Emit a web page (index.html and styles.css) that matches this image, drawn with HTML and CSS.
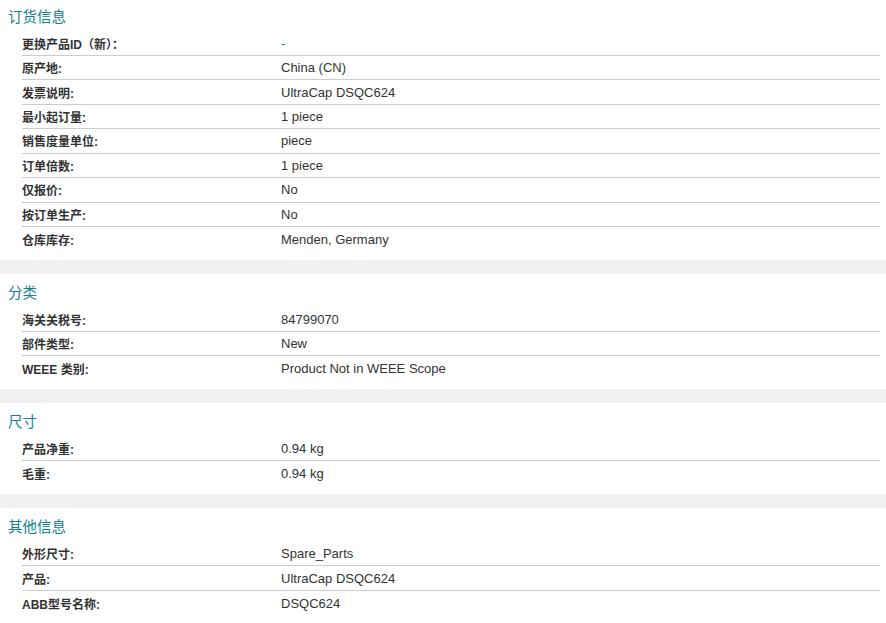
FILE: index.html
```html
<!DOCTYPE html>
<html lang="zh-CN">
<head>
<meta charset="utf-8">
<title>产品信息</title>
<link rel="stylesheet" href="styles.css">
</head>
<body>
<div class="page">
  <section class="section first">
    <h2 class="title">订货信息</h2>
    <div class="rows">
      <div class="row"><div class="label">更换产品ID（新）：</div><div class="value link">-</div></div>
      <div class="row"><div class="label">原产地:</div><div class="value">China (CN)</div></div>
      <div class="row"><div class="label">发票说明:</div><div class="value">UltraCap DSQC624</div></div>
      <div class="row"><div class="label">最小起订量:</div><div class="value">1 piece</div></div>
      <div class="row"><div class="label">销售度量单位:</div><div class="value">piece</div></div>
      <div class="row"><div class="label">订单倍数:</div><div class="value">1 piece</div></div>
      <div class="row"><div class="label">仅报价:</div><div class="value">No</div></div>
      <div class="row"><div class="label">按订单生产:</div><div class="value">No</div></div>
      <div class="row"><div class="label">仓库库存:</div><div class="value">Menden, Germany</div></div>
    </div>
  </section>
  <section class="section">
    <h2 class="title">分类</h2>
    <div class="rows">
      <div class="row"><div class="label">海关关税号:</div><div class="value">84799070</div></div>
      <div class="row"><div class="label">部件类型:</div><div class="value">New</div></div>
      <div class="row"><div class="label">WEEE 类别:</div><div class="value">Product Not in WEEE Scope</div></div>
    </div>
  </section>
  <section class="section">
    <h2 class="title">尺寸</h2>
    <div class="rows">
      <div class="row"><div class="label">产品净重:</div><div class="value">0.94 kg</div></div>
      <div class="row"><div class="label">毛重:</div><div class="value">0.94 kg</div></div>
    </div>
  </section>
  <section class="section last">
    <h2 class="title">其他信息</h2>
    <div class="rows">
      <div class="row"><div class="label">外形尺寸:</div><div class="value">Spare_Parts</div></div>
      <div class="row"><div class="label">产品:</div><div class="value">UltraCap DSQC624</div></div>
      <div class="row"><div class="label">ABB型号名称:</div><div class="value">DSQC624</div></div>
    </div>
  </section>
</div>
</body>
</html>
```

FILE: styles.css
```css
html, body {
  margin: 0;
  padding: 0;
  background: #f0f0f0;
  height: 100%;
}
body {
  font-family: "Liberation Sans", "Noto Sans CJK SC", sans-serif;
  color: #333;
  overflow: hidden;
}
.page {
  display: flex;
  flex-direction: column;
  gap: 14px;
  min-height: 100%;
}
.section {
  background: #fff;
  padding: 8px 6px 8.6px 0;
}
.section.first {
  padding-top: 6px;
}
.section.last {
  flex: 1;
}
.title {
  margin: 0 0 5.6px 0;
  padding-left: 8px;
  font-family: "Noto Sans CJK SC", "Liberation Sans", sans-serif;
  font-size: 14.5px;
  line-height: 20px;
  font-weight: normal;
  color: #13808f;
}
.rows {
  margin-left: 22px;
}
.row {
  display: flex;
  align-items: center;
  height: 24.43px;
  box-sizing: border-box;
  border-bottom: 1px solid #cccccc;
}
.row:last-child {
  border-bottom: none;
}
.label {
  width: 259px;
  flex: none;
  font-size: 12px;
  font-weight: bold;
  color: #333;
  font-family: "Liberation Sans", "Noto Sans CJK SC", sans-serif;
}
.value {
  font-size: 13px;
  color: #333;
}
.value.link {
  color: #13808f;
}
```
